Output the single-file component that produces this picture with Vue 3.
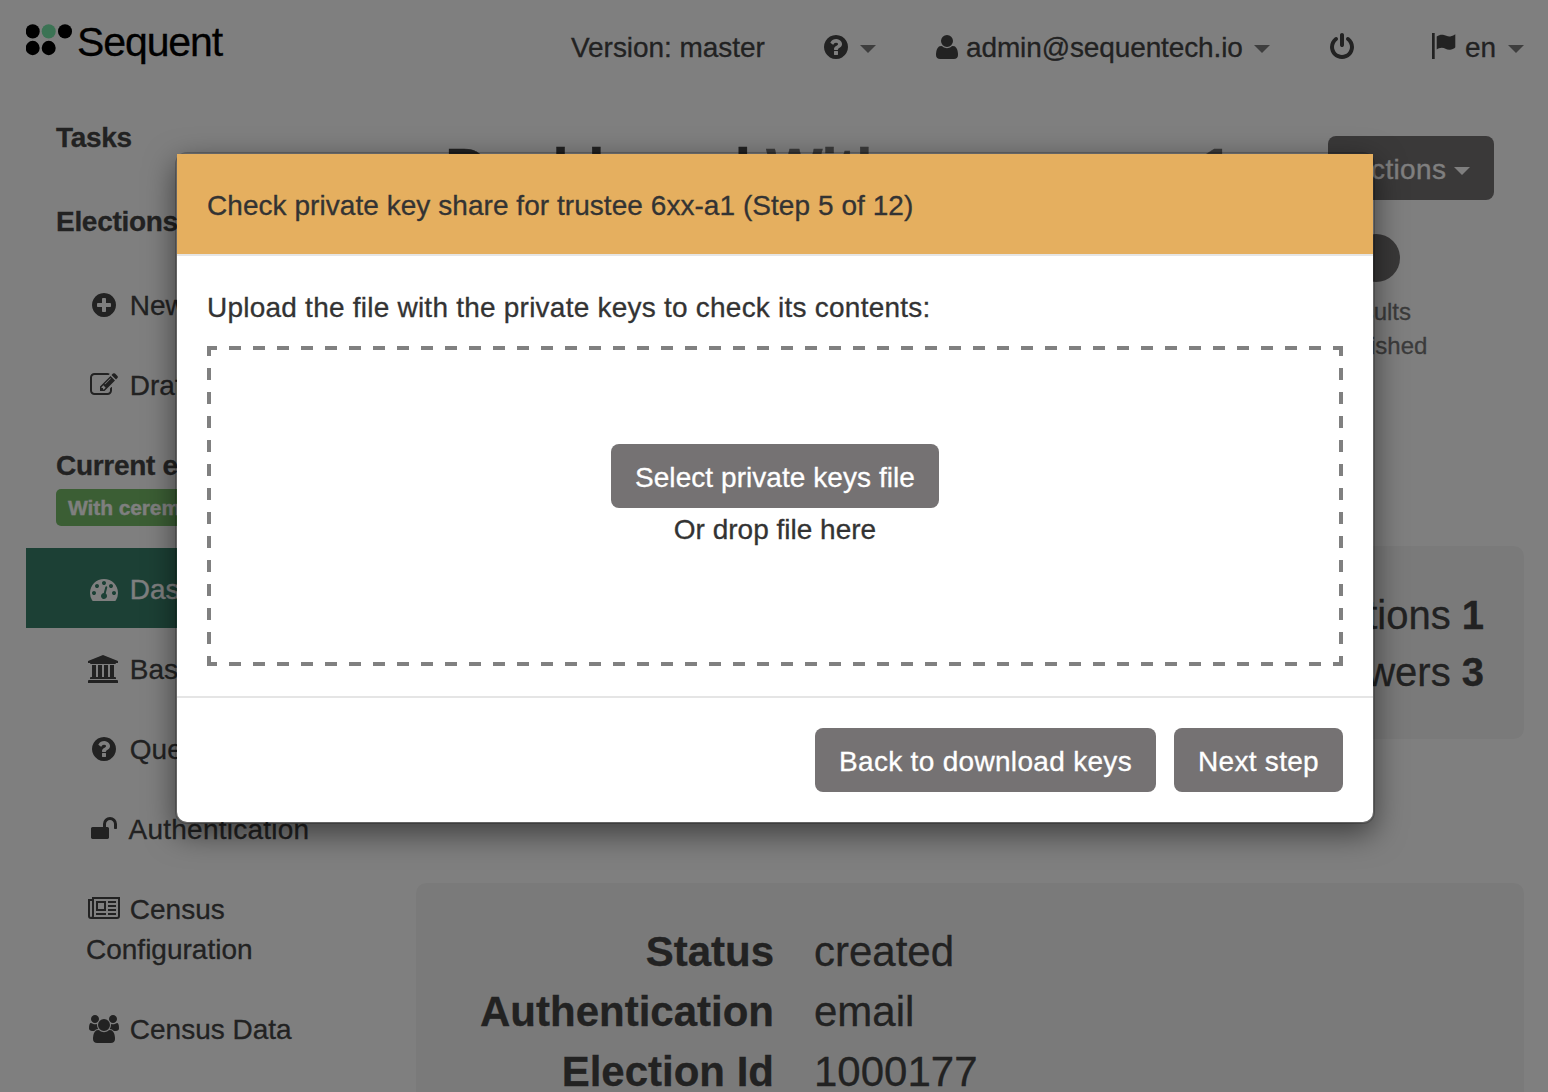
<script setup>
const icons = {
  question: { w: 28, box: '0 0 1792 1792', d: 'M1024 1376v-192q0-14-9-23t-23-9h-192q-14 0-23 9t-9 23v192q0 14 9 23t23 9h192q14 0 23-9t9-23zm256-672q0-88-55.5-163t-138.5-116-170-41q-243 0-371 213-15 24 8 42l132 100q7 6 19 6 16 0 25-12 53-68 86-92 34-24 86-24 48 0 85.5 26t37.5 59q0 38-20 61t-68 45q-63 28-115.5 86.5t-52.5 125.5v36q0 14 9 23t23 9h192q14 0 23-9t9-23q0-19 21.5-49.5t54.5-49.5q32-18 49-28.5t46-35 44.5-48 28-60.5 12.5-81zm384 192q0 209-103 385.5t-279.5 279.5-385.5 103-385.5-103-279.5-279.5-103-385.5 103-385.5 279.5-279.5 385.5-103 385.5 103 279.5 279.5 103 385.5z' },
  plus: { w: 28, box: '0 0 1792 1792', d: 'M1344 960v-128q0-26-19-45t-45-19h-256v-256q0-26-19-45t-45-19h-128q-26 0-45 19t-19 45v256h-256q-26 0-45 19t-19 45v128q0 26 19 45t45 19h256v256q0 26 19 45t45 19h128q26 0 45-19t19-45v-256h256q26 0 45-19t19-45zm320-64q0 209-103 385.5t-279.5 279.5-385.5 103-385.5-103-279.5-279.5-103-385.5 103-385.5 279.5-279.5 385.5-103 385.5 103 279.5 279.5 103 385.5z' },
  user: { w: 28, box: '0 0 1792 1792', d: 'M1600 1405q0 120-73 189.5t-194 69.5h-874q-121 0-194-69.5t-73-189.5q0-53 3.5-103.5t14-109 26.5-108.5 43-97.5 62-81 85.5-53.5 111.5-20q9 0 42 21.5t74.5 48 108 48 133.5 21.5 133.5-21.5 108-48 74.5-48 42-21.5q61 0 111.5 20t85.5 53.5 62 81 43 97.5 26.5 108.5 14 109 3.5 103.5zm-320-893q0 159-112.5 271.5t-271.5 112.5-271.5-112.5-112.5-271.5 112.5-271.5 271.5-112.5 271.5 112.5 112.5 271.5z' },
  power: { w: 28, box: '0 0 1792 1792', d: 'M1664 896q0 156-61 298t-164 245-245 164-298 61-298-61-245-164-164-245-61-298q0-182 80.5-343t226.5-270q43-32 95.5-25t83.5 50q32 42 24.5 94.5t-49.5 84.5q-98 74-151.5 181t-53.5 228q0 104 40.5 198.5t109.5 163.5 163.5 109.5 198.5 40.5 198.5-40.5 163.5-109.5 109.5-163.5 40.5-198.5q0-121-53.5-228t-151.5-181q-42-32-49.5-84.5t24.5-94.5q31-43 84-50t95 25q146 109 226.5 270t80.5 343zm-640-768v640q0 52-38 90t-90 38-90-38-38-90v-640q0-52 38-90t90-38 90 38 38 90z' },
  flag: { w: 28, box: '0 0 28 28', d: 'M2 0h2.7v26H2zM6.7 3.6C9 2 11 1.4 13 1.8c3 .6 5 2.3 8 1.5 1.600-.4 3-1.300 4.300-2.100v13c0 .8-3.600 2.600-6.100 2.600-3 0-4.500-2-7.500-2-2 0-3.500.8-5 1.800z' },
  edit: { w: 28, box: '0 0 1792 1792', d: 'M888 1184l116-116-152-152-116 116v56h96v96h56zm440-720q-16-16-33 1l-350 350q-17 17-1 33t33-1l350-350q17-17 1-33zm80 594v190q0 119-84.5 203.5t-203.5 84.5h-832q-119 0-203.5-84.5t-84.5-203.5v-832q0-119 84.5-203.5t203.5-84.5h832q63 0 117 25 15 7 18 23 3 17-9 29l-49 49q-14 14-32 8-23-6-45-6h-832q-66 0-113 47t-47 113v832q0 66 47 113t113 47h832q66 0 113-47t47-113v-126q0-13 9-22l64-64q15-15 35-7t20 29zm-96-738l288 288-672 672h-288v-288zm444 132l-92 92-288-288 92-92q28-28 68-28t68 28l152 152q28 28 28 68t-28 68z' },
  gauge: { w: 28, box: '0 0 1792 1792', d: 'M384 1152q0-53-37.5-90.5t-90.5-37.5-90.5 37.5-37.5 90.5 37.5 90.5 90.5 37.5 90.5-37.5 37.5-90.5zm192-448q0-53-37.5-90.5t-90.5-37.5-90.5 37.5-37.5 90.5 37.5 90.5 90.5 37.5 90.5-37.5 37.5-90.5zm428 481l101-382q6-26-7.5-48.5t-38.5-29.5-48 6.5-30 39.5l-101 382q-60 5-107 43.5t-63 98.5q-20 77 20 146t117 89 146-20 89-117q16-60-6-117t-72-91zm660-33q0-53-37.5-90.5t-90.5-37.5-90.5 37.5-37.5 90.5 37.5 90.5 90.5 37.5 90.5-37.5 37.5-90.5zm-640-640q0-53-37.5-90.5t-90.5-37.5-90.5 37.5-37.5 90.5 37.5 90.5 90.5 37.5 90.5-37.5 37.5-90.5zm448 192q0-53-37.5-90.5t-90.5-37.5-90.5 37.5-37.5 90.5 37.5 90.5 90.5 37.5 90.5-37.5 37.5-90.5zm320 448q0 261-141 483-19 29-54 29h-1402q-35 0-54-29-141-221-141-483 0-182 71-348t191-286 286-191 348-71 348 71 286 191 191 286 71 348z' },
  bank: { w: 32, box: '0 0 32 28', d: 'M15 0l15 6v2h-2q0 1-1 1H3q-1 0-1-1H0V6zM4 10h4v12h2V10h4v12h2V10h4v12h2V10h4v12h1q1 0 1 1v1H2v-1q0-1 1-1h1zM1 25h28q1 0 1 1v2H0v-2q0-1 1-1z' },
  unlock: { w: 28, box: '0 0 1792 1792', d: 'M1728 576v256q0 26-19 45t-45 19h-64q-26 0-45-19t-19-45v-256q0-106-75-181t-181-75-181 75-75 181v192h96q40 0 68 28t28 68v576q0 40-28 68t-68 28h-960q-40 0-68-28t-28-68v-576q0-40 28-68t68-28h672v-192q0-185 131.5-316.5t316.5-131.5 316.5 131.5 131.5 316.5z' },
  news: { w: 32, box: '0 0 32 28', d: 'M4 2h28v19q0 3-3 3H3q-3 0-3-3V4h4zM6 4v17q0 .5-.2 1H29q1 0 1-1V4zM2 6v15q0 1 1 1t1-1V6zM8 6h10v10H8zM10 8v6h6V8zM20 6h8v2h-8zM20 10h8v2h-8zM20 14h8v2h-8zM8 18h10v2H8zM20 18h8v2h-8z' },
  users: { w: 30, box: '0 0 1920 1792', d: 'M593 896q-162 5-265 128h-134q-82 0-138-40.5t-56-118.5q0-353 124-353 6 0 43.5 21t97.5 42.5 119 21.5q67 0 133-23-5 37-5 66 0 139 81 256zm1071 637q0 120-73 189.5t-194 69.5h-874q-121 0-194-69.5t-73-189.5q0-53 3.5-103.5t14-109 26.5-108.5 43-97.5 62-81 85.5-53.5 111.5-20q10 0 43 21.5t73 48 107 48 135 21.5 135-21.5 107-48 73-48 43-21.5q61 0 111.5 20t85.5 53.5 62 81 43 97.5 26.5 108.5 14 109 3.5 103.5zm-1024-1277q0 106-75 181t-181 75-181-75-75-181 75-181 181-75 181 75 75 181zm704 384q0 159-112.5 271.5t-271.5 112.5-271.5-112.5-112.5-271.5 112.5-271.5 271.5-112.5 271.5 112.5 112.5 271.5zm576 225q0 78-56 118.5t-138 40.5h-134q-103-123-265-128 81-117 81-256 0-29-5-66 66 23 133 23 59 0 119-21.5t97.5-42.5 43.5-21q124 0 124 353zm-128-609q0 106-75 181t-181 75-181-75-75-181 75-181 181-75 181 75 75 181z' },
}

const electionLinks = [
  { icon: 'plus', label: 'New' },
  { icon: 'edit', label: 'Drafts' },
]
const currentLinks = [
  { icon: 'gauge', label: 'Dashboard', active: true },
  { icon: 'bank', label: 'Basic' },
  { icon: 'question', label: 'Questions' },
  { icon: 'unlock', label: 'Authentication', wide: true },
  { icon: 'news', label: 'Census Configuration' },
  { icon: 'users', label: 'Census Data' },
]
const details = [
  ['Status', 'created'],
  ['Authentication', 'email'],
  ['Election Id', '1000177'],
]
</script>

<template>
  <div class="page">
    <header class="topbar">
      <div class="brand">
        <svg class="dots" width="48" height="34" viewBox="0 0 48 34">
          <ellipse cx="6.7" cy="8.4" rx="7" ry="7.2" />
          <ellipse cx="22.7" cy="8.4" rx="7" ry="7.2" fill="#76e6a8" />
          <ellipse cx="39" cy="8.4" rx="7" ry="7.2" />
          <ellipse cx="6.7" cy="25" rx="7" ry="7.2" />
          <ellipse cx="22.7" cy="25" rx="7" ry="7.2" />
        </svg>
        <span class="wordmark">Sequent</span>
      </div>
      <nav class="nav">
        <span class="version">Version: master</span>
        <a class="nav-item">
          <svg width="28" height="28" :viewBox="icons.question.box"><path :d="icons.question.d" /></svg>
          <i class="caret"></i>
        </a>
        <a class="nav-item account">
          <svg width="28" height="28" :viewBox="icons.user.box"><path :d="icons.user.d" /></svg>
          <span>admin@sequentech.io</span>
          <i class="caret"></i>
        </a>
        <a class="nav-item">
          <svg width="28" height="28" :viewBox="icons.power.box"><path :d="icons.power.d" /></svg>
        </a>
        <a class="nav-item lang">
          <svg width="28" height="28" :viewBox="icons.flag.box"><path :d="icons.flag.d" /></svg>
          <span>en</span>
          <i class="caret"></i>
        </a>
      </nav>
    </header>

    <div class="columns">
      <aside class="sidebar">
        <h4>Tasks</h4>
        <h4>Elections</h4>
        <ul>
          <li v-for="l in electionLinks" :key="l.label">
            <span class="fw"><svg :width="icons[l.icon].w" height="28" :viewBox="icons[l.icon].box"><path fill-rule="evenodd" :d="icons[l.icon].d" /></svg></span>
            {{ l.label }}
          </li>
        </ul>
        <h4 class="current">Current election</h4>
        <div class="label-row"><span class="label">With ceremony 1</span></div>
        <ul>
          <li v-for="l in currentLinks" :key="l.label" :class="{ active: l.active, wide: l.wide }">
            <span class="fw"><svg :width="icons[l.icon].w" height="28" :viewBox="icons[l.icon].box"><path :fill-rule="l.icon === 'users' ? 'nonzero' : 'evenodd'" :d="icons[l.icon].d" /></svg></span>
            {{ l.label }}
          </li>
        </ul>
      </aside>

      <main class="main">
        <div class="title-row">
          <h2>Dashboard <span>With ceremony 1</span></h2>
          <button class="btn actions">Actions <i class="caret"></i></button>
        </div>
        <div class="progress">
          <div class="step">
            <i class="bullet"></i>
            <span class="first">Results</span>
            <span>published</span>
          </div>
        </div>
        <section class="well counts">
          <div>Questions <b>1</b></div>
          <div>Answers <b>3</b></div>
        </section>
        <section class="well details">
          <template v-for="[k, v] in details" :key="k">
            <b>{{ k }}</b><span>{{ v }}</span>
          </template>
        </section>
      </main>
    </div>

    <div class="backdrop">
      <div class="modal">
        <div class="modal-header">Check private key share for trustee 6xx-a1 (Step 5 of 12)</div>
        <div class="modal-body">
          <p>Upload the file with the private keys to check its contents:</p>
          <div class="dropzone">
            <button class="btn select">Select private keys file</button>
            <span>Or drop file here</span>
          </div>
        </div>
        <div class="modal-footer">
          <button class="btn back">Back to download keys</button>
          <button class="btn next">Next step</button>
        </div>
      </div>
    </div>
  </div>
</template>

<style>
body {
  margin: 0;
  overflow: hidden;
}
</style>

<style scoped>
* {
  box-sizing: border-box;
}
.page {
  position: relative;
  width: 1548px;
  height: 1092px;
  overflow: hidden;
  background: #fff;
  color: #444;
  font: 28px/40px "Liberation Sans", Arial, sans-serif;
  -webkit-text-stroke-width: 0.3px;
}
svg {
  display: block;
  flex: none;
  fill: currentColor;
  stroke: none;
}
.topbar {
  display: flex;
  height: 94px;
  padding-left: 26px;
}
.brand {
  display: flex;
  width: 544px;
  color: #000;
}
.dots {
  margin-top: 23px;
}
.wordmark {
  margin: 19px 0 0 3px;
  font-size: 41px;
  line-height: 47px;
  letter-spacing: -1.1px;
}
.nav {
  display: grid;
  grid-template-columns: 252px 111px 395px 102px 94px;
  height: 94px;
  align-items: center;
}
.version {
  padding: 2px 0 0 1px;
  letter-spacing: -0.05px;
}
.nav-item {
  display: flex;
  align-items: center;
}
.nav-item span {
  padding-top: 2px;
}
.caret {
  flex: none;
  width: 0;
  border: 8px solid transparent;
  border-top-color: #7c7c7c;
  border-bottom: 0;
  margin: 4px 0 0 10px;
}
.account {
  width: 337px;
}
.account span {
  margin-left: 5px;
  letter-spacing: -0.12px;
}
.account .caret,
.lang .caret {
  margin-left: auto;
}
.lang span {
  margin-left: 7px;
}
.columns {
  display: flex;
}
.sidebar {
  width: 360px;
  margin-left: 26px;
  padding-top: 24px;
}
h4 {
  margin: 0 0 44px;
  padding-left: 30px;
  font-size: 28px;
  line-height: 40px;
  letter-spacing: -0.3px;
}
ul {
  margin: 0;
  padding: 0;
  list-style: none;
}
h4 + ul {
  margin-top: -22px;
}
li {
  padding: 22px 60px 18px;
  letter-spacing: 0;
}
li.wide {
  letter-spacing: 0.25px;
}
.fw {
  display: inline-flex;
  justify-content: center;
  width: 36px;
  height: 28px;
  margin: -4px 0;
  vertical-align: -4px;
}
li.active {
  background: #38806a;
  color: #fff;
}
h4.current {
  margin: 22px 0 3px;
}
.label-row {
  display: flex;
  height: 59px;
  padding-left: 30px;
}
.label {
  height: 37px;
  padding: 0 12px;
  border-radius: 5px;
  background: #77bd69;
  color: #fff;
  font-size: 21px;
  font-weight: bold;
  line-height: 38px;
  letter-spacing: -0.1px;
}
.main {
  width: 1108px;
  margin-left: 30px;
  padding-top: 42px;
}
.title-row {
  display: flex;
  justify-content: space-between;
  height: 98px;
  padding: 0 30px 0 29px;
}
h2 {
  margin: 1px 0 0;
  font-size: 60px;
  line-height: 66px;
  letter-spacing: -0.9px;
  white-space: nowrap;
}
h2 span {
  color: #777;
}
.btn {
  height: 64px;
  padding: 14px 0 10px;
  border: 0;
  border-radius: 8px;
  background: #757273;
  color: #fff;
  font: inherit;
  text-align: center;
  white-space: nowrap;
}
.actions {
  display: flex;
  width: 166px;
  padding-left: 24px;
  letter-spacing: 0.35px;
}
.actions .caret {
  margin: 17px 24px 0 auto;
  border-top-color: #fff;
}
.progress {
  display: flex;
  justify-content: flex-end;
  height: 312px;
  padding-right: 88px;
}
.step {
  display: flex;
  flex-direction: column;
  align-items: center;
  width: 120px;
  color: #777;
  font-size: 24px;
  line-height: 34px;
}
.bullet {
  width: 48px;
  height: 48px;
  margin-bottom: 13px;
  border-radius: 50%;
  background: #727071;
}
.first {
  padding-right: 10px;
}
.well {
  border-radius: 10px;
  background: #f5f5f5;
}
.counts {
  height: 193px;
  padding: 41px 40px 38px;
  font-size: 40px;
  line-height: 57px;
  text-align: right;
}
.details {
  display: grid;
  grid-template-columns: 318px auto;
  column-gap: 40px;
  align-content: start;
  height: 260px;
  margin-top: 144px;
  padding: 39px 40px 0;
  font-size: 42px;
  line-height: 60px;
}
.details b {
  text-align: right;
}
.backdrop {
  position: absolute;
  inset: 0;
  background: rgba(0, 0, 0, 0.5);
}
.modal {
  width: 1200px;
  margin: 152px 0 0 175px;
  border: 2px solid rgba(0, 0, 0, 0.2);
  border-radius: 12px;
  background: #fff;
  background-clip: padding-box;
  box-shadow: 0 10px 30px rgba(0, 0, 0, 0.5);
  color: #333;
}
.modal-header {
  height: 102px;
  padding: 32px 30px 28px;
  border-bottom: 2px solid #e5e5e5;
  background: #e5af5f;
  background-clip: padding-box;
  letter-spacing: 0.05px;
}
.modal-body {
  height: 440px;
  padding: 32px 30px 30px;
}
p {
  margin: 0 0 18px;
  letter-spacing: 0.23px;
}
.dropzone {
  --h: repeating-linear-gradient(90deg, #808080 0 12px, transparent 12px 24px);
  --v: repeating-linear-gradient(180deg, #808080 0 12px, transparent 12px 24px);
  display: flex;
  flex-direction: column;
  align-items: center;
  gap: 2px;
  height: 320px;
  padding-top: 98px;
  background-image: var(--h), var(--h), var(--v), var(--v);
  background-position: -2px 0, -2px 100%, 0 -2px, 100% -2px;
  background-size: 1140px 4px, 1140px 4px, 4px 324px, 4px 324px;
  background-repeat: no-repeat;
}
.select {
  width: 328px;
  letter-spacing: 0.06px;
}
.modal-footer {
  display: flex;
  justify-content: flex-end;
  gap: 18px;
  height: 126px;
  padding: 30px;
  border-top: 2px solid #e5e5e5;
}
.back {
  width: 341px;
  letter-spacing: 0.31px;
}
.next {
  width: 169px;
  letter-spacing: 0.3px;
}
</style>
